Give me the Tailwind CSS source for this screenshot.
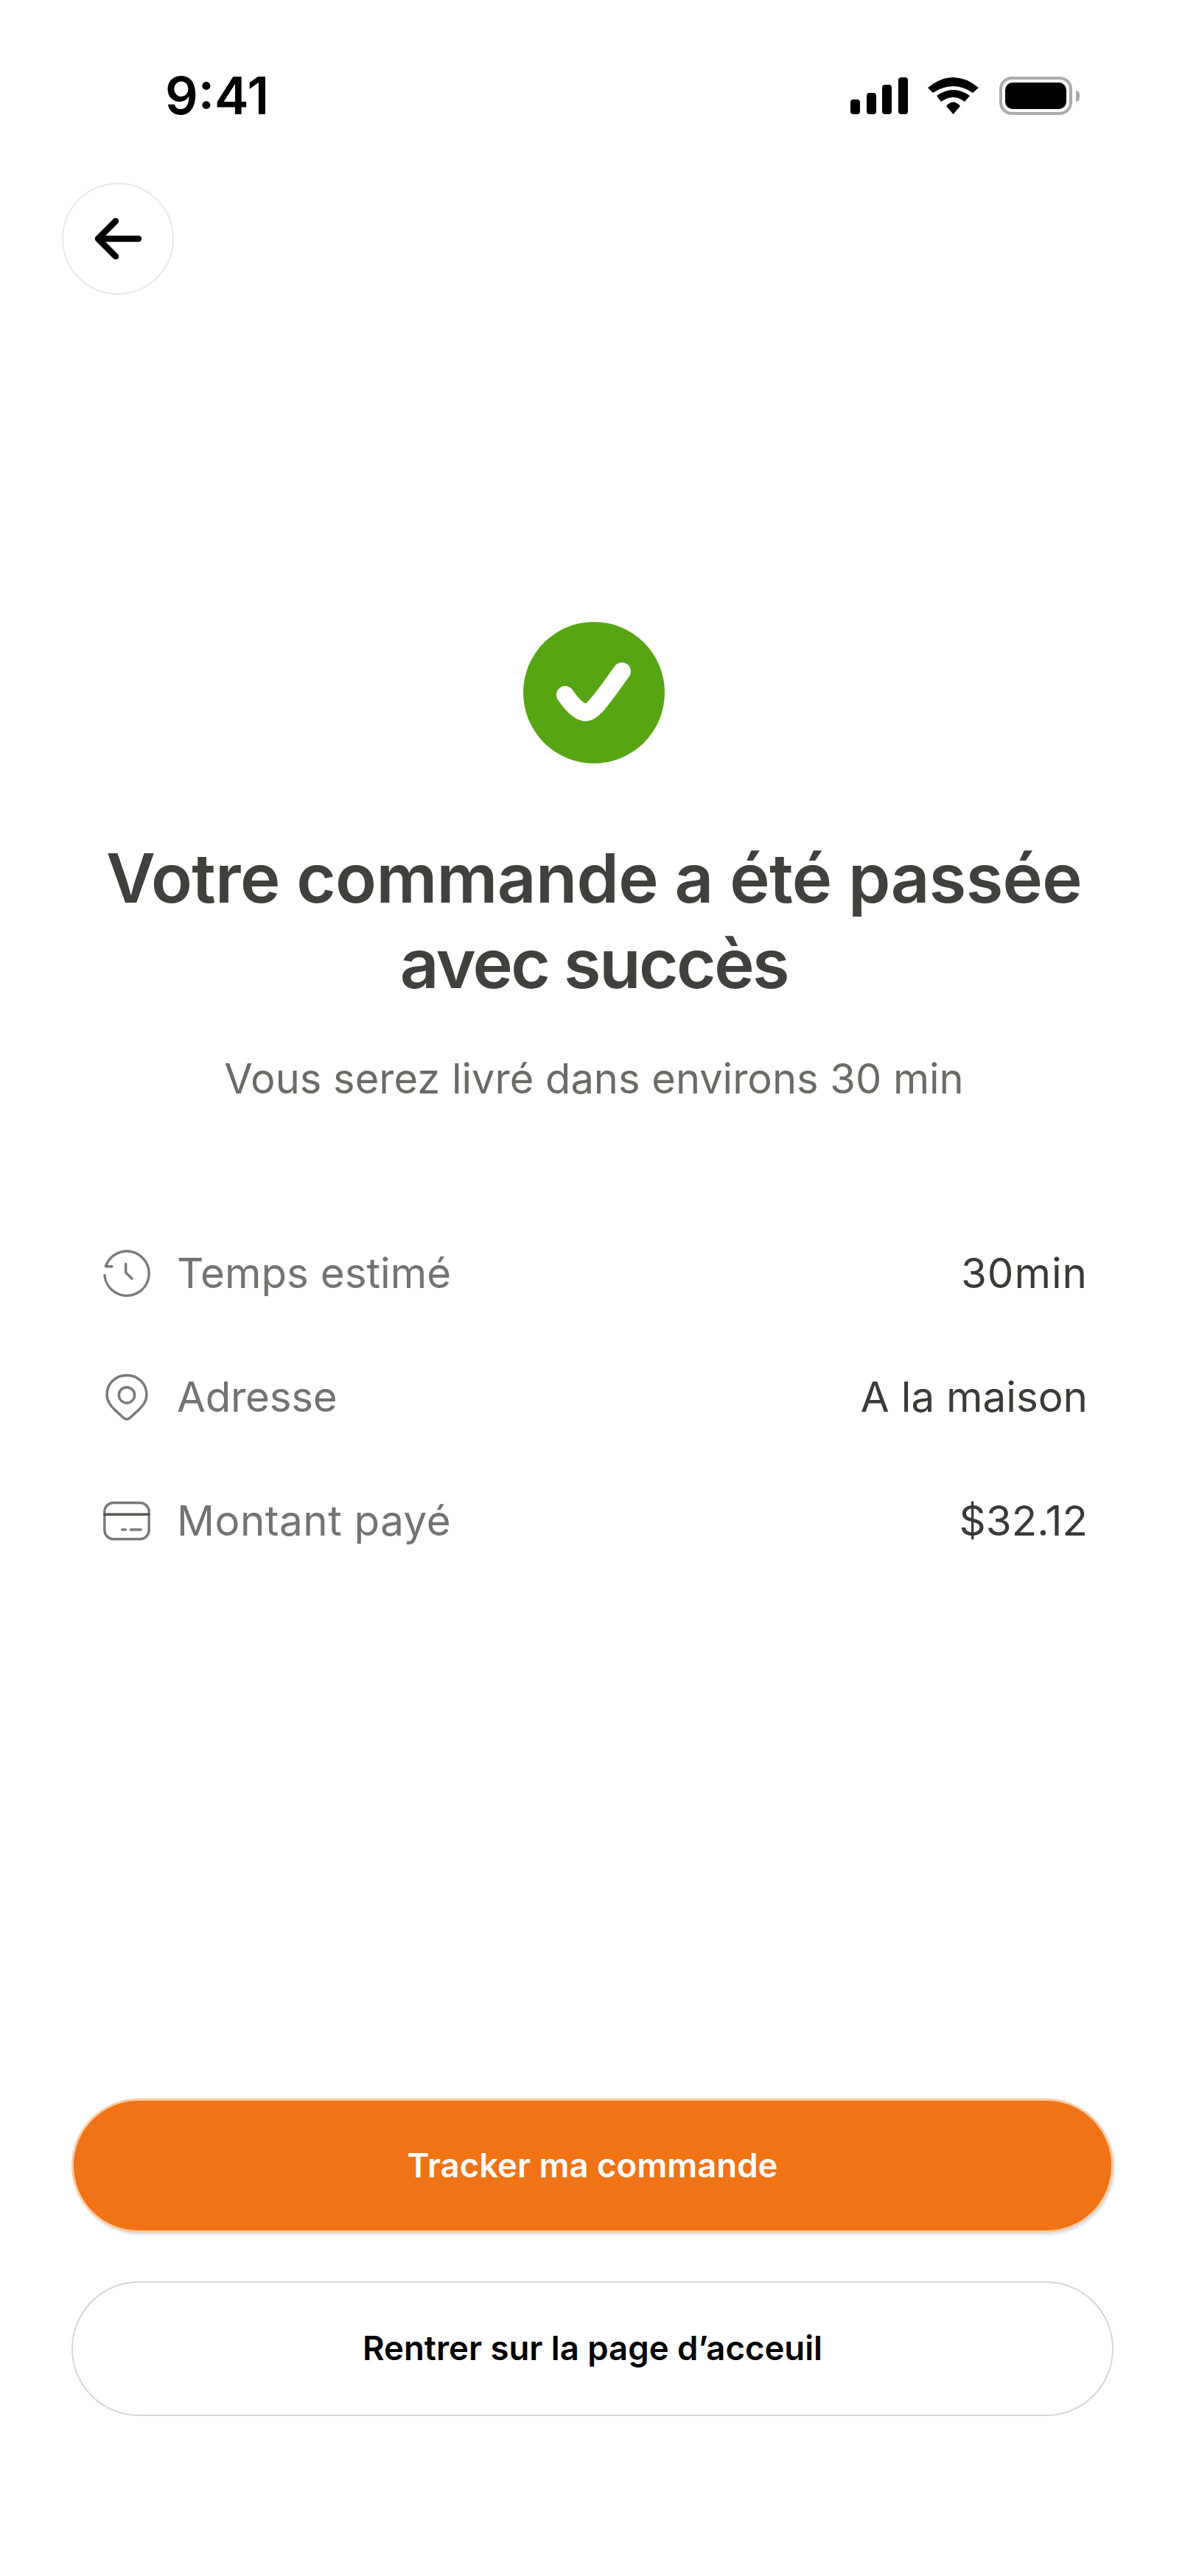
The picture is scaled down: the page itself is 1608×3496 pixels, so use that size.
<!DOCTYPE html>
<html lang="fr">

<head>
  <meta charset="UTF-8">
  <meta name="viewport" content="width=device-width, initial-scale=1.0">
  <title>Commande passée</title>
  <script src="https://cdn.jsdelivr.net/npm/@tailwindcss/browser@4"></script>
</head>

<body class="bg-white font-['Inter',sans-serif]">
  <div class="w-[1608px] h-[3496px] overflow-hidden flex flex-col">

    <!-- status bar -->
    <div class="flex items-center justify-between h-[52px] mt-[104px] pl-[224px] pr-[143px]">
      <span class="text-[70px] leading-none font-semibold text-black">9:41</span>
      <div class="flex items-center">
        <div class="flex items-end gap-[8.67px]">
          <div class="w-[13px] h-[20px] rounded-[4px] bg-black"></div>
          <div class="w-[13px] h-[29px] rounded-[4px] bg-black"></div>
          <div class="w-[13px] h-[40px] rounded-[4px] bg-black"></div>
          <div class="w-[13px] h-[50px] rounded-[4px] bg-black"></div>
        </div>
        <svg class="ml-[27px]" width="69" height="50" viewBox="0 0 69 50" fill="#000">
          <path d="M0 14 Q34.5 -14 69 14 L61 21 Q34.5 3 7 21 Z" />
          <path d="M12 25 Q34.5 9 57 25 L50 33 Q34.5 21 18 33 Z" />
          <path d="M25 39 Q34.5 28 44 39 L34.5 50 Z" />
        </svg>
        <div class="ml-[28px] w-[99px] h-[52px] rounded-[17px] border-[4px] border-[#aaaaaa] p-[4px]">
          <div class="w-full h-full rounded-[10px] bg-black"></div>
        </div>
        <div class="ml-[5px] w-[5px] h-[15px] rounded-r-full bg-[#aaaaaa]"></div>
      </div>
    </div>

    <!-- back button -->
    <button class="ml-[84px] mt-[92px] w-[152px] h-[152px] rounded-full border-2 border-[#e8e8e8] flex items-center justify-center">
      <svg width="64" height="56" viewBox="0 0 64 56" fill="none" stroke="#000" stroke-width="8.5" stroke-linecap="round" stroke-linejoin="round">
        <path d="M60 28 H5 M29 4 L5 28 L29 52" />
      </svg>
    </button>

    <!-- success icon -->
    <div class="mt-[444px] ml-[710px] w-[192px] h-[192px] rounded-full bg-[#57a513] flex items-center justify-center">
      <svg width="192" height="192" viewBox="0 0 192 192" fill="none" stroke="#fff" stroke-width="24" stroke-linecap="round" stroke-linejoin="round">
        <path d="M57 99 C66 112 74 121 84 123 C93 123 100 115 134 67" />
      </svg>
    </div>

    <h1 class="mt-[98px] pl-1 text-center text-[92px] leading-[116px] font-semibold text-[#40403c] tracking-[-0.67px]">Votre commande a été passée<br><span class="tracking-[-2.5px]">avec succès</span></h1>
    <p class="mt-[62px] pl-1 text-center text-[56px] leading-[72px] text-[#6b6b66]">Vous serez livré dans environs 30 min</p>

    <!-- details -->
    <div class="mt-[196px] ml-[140px] mr-[132px] flex flex-col gap-[104px] text-[56.5px] leading-[64px]">
      <div class="flex items-center justify-between">
        <div class="flex items-center gap-[36px] text-[#71746f]">
          <svg width="64" height="64" viewBox="0 0 24 24" fill="none" stroke="#7a7a78" stroke-width="1.3" stroke-linecap="round" stroke-linejoin="round">
            <path d="M4.5 8.5 H1.3 A11.3 11.3 0 1 1 .75 13" />
            <path d="M11.5 7.25 V11.6 L14.6 14.75" />
          </svg>
          <span>Temps estimé</span>
        </div>
        <span class="text-[#3a3a36] tracking-[1px]">30min</span>
      </div>
      <div class="flex items-center justify-between">
        <div class="flex items-center gap-[36px] text-[#71746f]">
          <svg width="64" height="64" viewBox="0 0 24 24" fill="none" stroke="#7a7a78" stroke-width="1.3" stroke-linecap="round" stroke-linejoin="round">
            <path d="M12 .9 C5.9 .9 1.9 5.5 1.9 10.8 C1.9 14.4 4 16.5 6 18.6 L10.4 22.6 Q12 24 13.6 22.6 L18 18.6 C20 16.5 22.1 14.4 22.1 10.8 C22.1 5.5 18.1 .9 12 .9 Z" />
            <circle cx="12" cy="11" r="4" />
          </svg>
          <span class="tracking-[-0.3px]">Adresse</span>
        </div>
        <span class="text-[#3a3a36]">A la maison</span>
      </div>
      <div class="flex items-center justify-between">
        <div class="flex items-center gap-[36px] text-[#71746f]">
          <svg width="64" height="64" viewBox="0 0 24 24" fill="none" stroke="#7a7a78" stroke-width="1.3" stroke-linecap="round" stroke-linejoin="round">
            <rect x=".7" y="2.8" width="22.6" height="18.5" rx="4.5" />
            <path stroke="#55554f" d="M.7 8.75 H23.3" />
            <path d="M9.6 16.5 H11.4 M14 16.5 H19.2" />
          </svg>
          <span class="tracking-[0.5px]">Montant payé</span>
        </div>
        <span class="text-[#3a3a36]">$32.12</span>
      </div>
    </div>

    <!-- buttons -->
    <div class="mt-auto mb-[217px] mx-[97px] flex flex-col gap-[66px]">
      <button class="h-[182px] rounded-full bg-[#f07316] border-[3px] border-[#fbcaa0] shadow-[2px_3px_3px_#dfe3e8] text-white text-[45.5px] font-semibold">Tracker ma commande</button>
      <button class="h-[183px] rounded-full bg-white border-2 border-[#d6d6d6] text-black text-[45.5px] font-semibold">Rentrer sur la page d’acceuil</button>
    </div>
  </div>
</body>

</html>
